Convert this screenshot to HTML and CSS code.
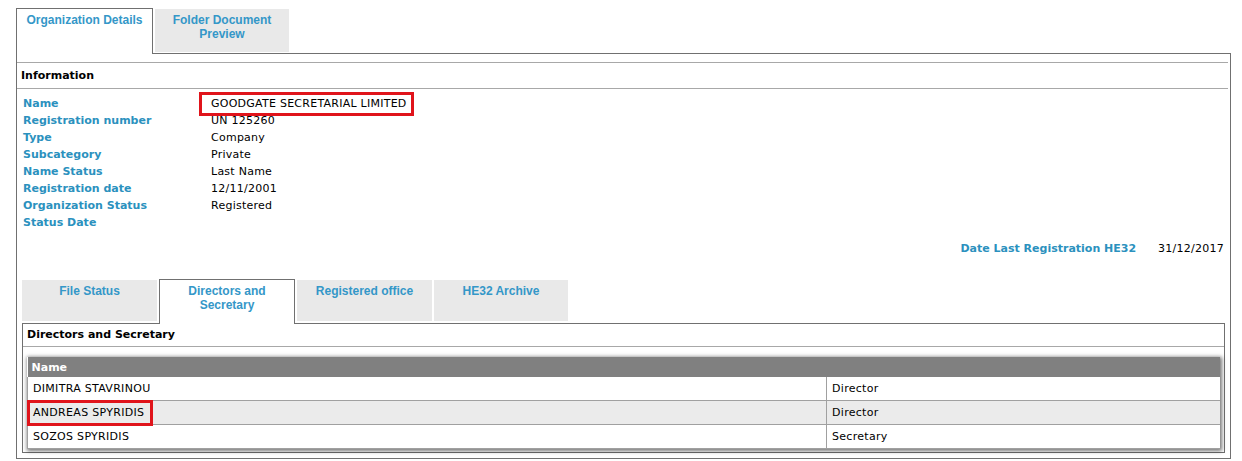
FILE: index.html
```html
<!DOCTYPE html>
<html lang="en">
<head>
    <meta charset="UTF-8">
    <title>Organization Details</title>
    <link rel="stylesheet" href="styles.css">
</head>
<body>
    <div class="page">
        <div class="tabs">
            <div class="tab active">Organization Details</div>
            <div class="tab">Folder Document<br>Preview</div>
        </div>
        <div class="panel">
            <div class="section-title">Information</div>
            <div class="info">
                <div class="label">Name</div>
                <div class="value"><span class="mark">GOODGATE SECRETARIAL LIMITED</span></div>
                <div class="label">Registration number</div>
                <div class="value">UN 125260</div>
                <div class="label">Type</div>
                <div class="value">Company</div>
                <div class="label">Subcategory</div>
                <div class="value">Private</div>
                <div class="label">Name Status</div>
                <div class="value">Last Name</div>
                <div class="label">Registration date</div>
                <div class="value">12/11/2001</div>
                <div class="label">Organization Status</div>
                <div class="value">Registered</div>
                <div class="label">Status Date</div>
                <div class="value"></div>
            </div>
            <div class="last-reg">
                <span class="label">Date Last Registration HE32</span>
                <span class="value">31/12/2017</span>
            </div>

            <div class="tabs sub-tabs">
                <div class="tab">File Status</div>
                <div class="tab active">Directors and<br>Secretary</div>
                <div class="tab">Registered office</div>
                <div class="tab">HE32 Archive</div>
            </div>
            <div class="sub-panel">
                <div class="section-title">Directors and Secretary</div>
                <table class="grid">
                    <thead>
                        <tr><th colspan="2">Name</th></tr>
                    </thead>
                    <tbody>
                        <tr><td class="name-col">DIMITRA STAVRINOU</td><td>Director</td></tr>
                        <tr class="alt"><td class="name-col"><span class="mark small">ANDREAS SPYRIDIS</span></td><td>Director</td></tr>
                        <tr><td class="name-col">SOZOS SPYRIDIS</td><td>Secretary</td></tr>
                    </tbody>
                </table>
            </div>
        </div>
    </div>
</body>
</html>
```

FILE: styles.css
```css
* {
    box-sizing: border-box;
}

body {
    margin: 0;
    background: #fff;
    font-family: 'DejaVu Sans', Verdana, sans-serif;
    font-size: 11px;
    color: #000;
}

.page {
    padding: 8px 11px 0 16px;
}

/* tabs */
.tabs {
    display: flex;
    align-items: flex-start;
    gap: 2px;
}

.tab {
    width: 134px;
    height: 43px;
    margin-top: 1px;
    padding-top: 4px;
    background: #e9e9e9;
    color: #3497c8;
    font-family: 'Liberation Sans', Arial, sans-serif;
    font-weight: bold;
    font-size: 12px;
    line-height: 14px;
    text-align: center;
}

.tab.active {
    width: 137px;
    height: 46px;
    margin-top: 0;
    margin-bottom: -1px;
    background: #fff;
    border: 1px solid #707070;
    border-bottom: none;
    position: relative;
    z-index: 1;
}

.panel {
    border: 1px solid #707070;
    padding: 8px 2px 5px 0;
}

.section-title {
    height: 27px;
    line-height: 25px;
    padding-left: 4px;
    border-top: 1px solid #a8a8a8;
    border-bottom: 1px solid #a8a8a8;
    font-weight: bold;
}

/* information block */
.info {
    display: grid;
    grid-template-columns: 188px 1fr;
    padding: 6px 0 0 6px;
    line-height: 17px;
}

.label {
    color: #2b91be;
    font-weight: bold;
}

.value {
    color: #000;
    letter-spacing: 0.25px;
}

.mark {
    display: inline-block;
    position: relative;
}

.mark::after {
    content: '';
    position: absolute;
    left: -12px;
    right: -7px;
    top: -3px;
    bottom: -4px;
    border: 3px solid #e0141b;
}

.last-reg {
    display: flex;
    justify-content: flex-end;
    gap: 22px;
    margin-top: 9px;
    padding-right: 4px;
    line-height: 17px;
}

/* lower tabs */
.sub-tabs {
    margin: 22px 0 0 5px;
}

.sub-tabs .tab {
    width: 135px;
    height: 41px;
}

.sub-tabs .tab.active {
    width: 136px;
    height: 45px;
}

.sub-tabs .tab:last-child {
    width: 134px;
}

.sub-panel {
    margin: 0 3px 0 5px;
    border: 1px solid #707070;
    padding-bottom: 3px;
}

.sub-panel .section-title {
    height: 23px;
    line-height: 21px;
    border-top: none;
}

.grid {
    width: calc(100% - 8px);
    margin: 10px 0 0 4px;
    border-collapse: collapse;
    box-shadow: 1px 1px 4px 1px rgba(0, 0, 0, 0.55);
}

.grid th {
    height: 20px;
    padding: 0 4px;
    background: #808080;
    color: #fff;
    font-weight: bold;
    text-align: left;
}

.grid td {
    height: 24px;
    padding: 0 5px;
    border: 1px solid #a0a0a0;
    border-right: none;
    background: #fff;
    letter-spacing: 0.3px;
}

.grid tr:first-child td {
    border-top: none;
    height: 23px;
}

.grid tr.alt td {
    background: #ebebeb;
}

.grid td.name-col {
    width: 799px;
}

.mark.small::after {
    left: -6px;
    right: -9px;
    top: -6px;
    bottom: -7px;
}
```
